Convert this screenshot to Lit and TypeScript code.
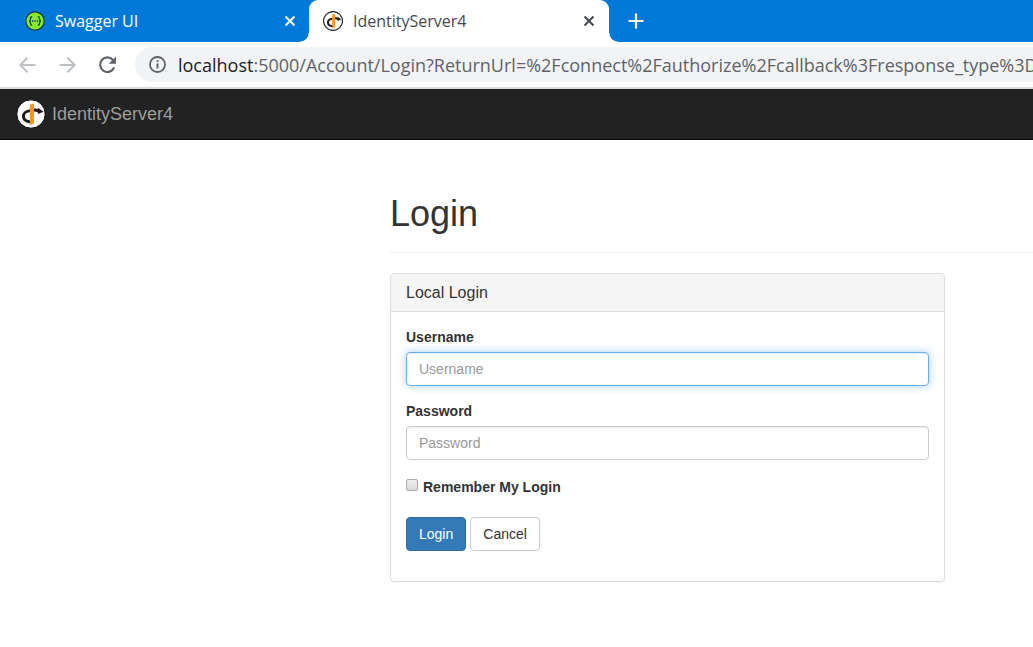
import { LitElement, html, css, svg } from "lit";
import { customElement, property } from "lit/decorators.js";

const mark = svg`
  <path d="M14.500 11.600C9.800 12 7.400 14.600 7.400 17.300c0 3 2.800 5.300 7.600 5.700" fill="none" stroke="#1b1b1b" stroke-width="2.900"/>
  <path d="M17.500 9.700c1.600-.3 3-.1 4.200.4l.2-1.300 5.600 3.900-5.600 2.300-.1-1.700c-1.300-.7-2.700-.9-4.300-.7z" fill="#1b1b1b"/>
  <path d="M13.800 5.700l4.200-1.400v20.400l-4.200 1.300z" fill="#ff9412"/>`;

@customElement("identity-logo")
export class IdentityLogo extends LitElement {
  @property({ type: Number }) size = 30;

  static styles = css`
    :host { display: block; flex: none; }
    svg { display: block; }
  `;

  render() {
    return html`<svg width=${this.size} height=${this.size} viewBox="0 0 30 30" aria-hidden="true">
      <circle cx="15" cy="15" r="14.200" fill="#fff" stroke=${this.size < 25 ? "#2b2b2b" : "#0c0c0c"} stroke-width=${this.size < 25 ? 1.8 : 1} />
      ${mark}
    </svg>`;
  }
}

@customElement("browser-chrome")
export class BrowserChrome extends LitElement {
  static styles = css`
    :host { display: block; font-family: "Open Sans", "Noto Sans", sans-serif; }
    button { border: 0; padding: 0; background: none; color: inherit; display: block; flex: none; }
    svg { display: block; flex: none; }
    .tabs { display: flex; height: 42px; background: #0078d7; color: #fff; font-size: 16px; line-height: 22px; }
    .tab { box-sizing: border-box; display: flex; align-items: center; gap: 10px; padding: 0 12px 0 25px; width: 309px; }
    .tab.active { position: relative; width: 300px; padding: 0 13px 0 14px; background: #fff; color: #45494d; border-radius: 9px 9px 0 0; }
    .tab.active::before, .tab.active::after { content: ""; position: absolute; bottom: 0; width: 9px; height: 9px; }
    .tab.active::before { right: 100%; background: radial-gradient(circle at 0 0, #0078d7 8px, #fff 9px); }
    .tab.active::after { left: 100%; background: radial-gradient(circle at 100% 0, #0078d7 8px, #fff 9px); }
    .title { flex: 1; white-space: nowrap; }
    .add { padding-left: 19px; }
    .toolbar { display: flex; align-items: center; height: 45px; padding-left: 18px; background: #fff; border-bottom: 2px solid #dadce0; color: #5f6368; }
    .nav { display: flex; gap: 20px; }
    .nav button:disabled { color: #bdc1c6; }
    .address { display: flex; flex: 1; min-width: 0; align-items: center; gap: 12px; height: 35px; margin-left: 16px; padding-left: 14px; overflow: hidden; background: #f1f3f4; border-radius: 18px 0 0 18px; }
    .url { white-space: nowrap; font-size: 18px; line-height: 26px; }
    .host { color: #202124; }
  `;

  private cross = html`<svg width="14" height="14" viewBox="0 0 14 14"><path d="M2.500 2.500l9 9M11.500 2.500l-9 9" stroke="currentColor" stroke-width="2" fill="none"/></svg>`;

  render() {
    return html`
      <div class="tabs">
        <div class="tab">
          <svg width="20" height="20" viewBox="0 0 20 20" aria-hidden="true">
            <circle cx="10" cy="10" r="9.200" fill="#85ea2d" stroke="#173647" stroke-width="1.200"/>
            <path d="M7.200 5.700c-1.400 0-1.700.5-1.700 1.700 0 1.500-.1 2.300-1.300 2.600 1.200.3 1.300 1.100 1.300 2.600 0 1.200.3 1.700 1.700 1.700M12.800 5.700c1.400 0 1.700.5 1.700 1.700 0 1.500.1 2.300 1.300 2.600-1.200.3-1.300 1.100-1.300 2.600 0 1.200-.3 1.700-1.700 1.700" fill="none" stroke="#173647" stroke-width="1.300"/>
            <path d="M7 10h1.300M9.400 10h1.300M11.800 10h1.300" stroke="#173647" stroke-width="1.300"/>
          </svg>
          <span class="title">Swagger UI</span>
          <button aria-label="Close Swagger UI">${this.cross}</button>
        </div>
        <div class="tab active">
          <identity-logo .size=${20}></identity-logo>
          <span class="title">IdentityServer4</span>
          <button aria-label="Close IdentityServer4">${this.cross}</button>
        </div>
        <button class="add" aria-label="New tab">
          <svg width="16" height="16" viewBox="0 0 16 16"><path d="M8 .5v15M.5 8h15" stroke="currentColor" stroke-width="2.200"/></svg>
        </button>
      </div>
      <div class="toolbar">
        <div class="nav">
          <button aria-label="Back" disabled>
            <svg width="20" height="20" viewBox="0 0 20 20"><path d="M17.500 10H3M9.500 2.800L2.300 10l7.200 7.200" fill="none" stroke="currentColor" stroke-width="2"/></svg>
          </button>
          <button aria-label="Forward" disabled>
            <svg width="20" height="20" viewBox="0 0 20 20"><path d="M1.500 10H16M9.500 2.800l7.200 7.200-7.200 7.200" fill="none" stroke="currentColor" stroke-width="2"/></svg>
          </button>
          <button aria-label="Reload">
            <svg width="21" height="20" viewBox="0 0 21 20"><path d="M15.200 5.200A7.300 7.300 0 1 0 16.200 12.400" fill="none" stroke="currentColor" stroke-width="2.200"/><path d="M18 1.500v7.300h-7.300z" fill="currentColor"/></svg>
          </button>
        </div>
        <div class="address">
          <svg width="17" height="17" viewBox="0 0 17 17" aria-hidden="true"><circle cx="8.500" cy="8.500" r="7.500" fill="none" stroke="currentColor" stroke-width="1.800"/><path d="M8.500 4.200v1.900M8.500 7.500v5" stroke="currentColor" stroke-width="1.900"/></svg>
          <span class="url"><span class="host">localhost</span>:5000/Account/Login?ReturnUrl=%2Fconnect%2Fauthorize%2Fcallback%3Fresponse_type%3D</span>
        </div>
      </div>`;
  }
}

@customElement("app-root")
export class AppRoot extends LitElement {
  static styles = css`
    :host { display: block; overflow: hidden; background: #fff; color: #333; font: 14px/20px "Liberation Sans", Arial, sans-serif; }
    .navbar { display: flex; height: 50px; background: #222; border-bottom: 1px solid #080808; }
    .brand { display: flex; align-items: center; gap: 6px; padding-left: 16px; color: #9d9d9d; font-size: 18px; text-decoration: none; }
    .page { padding: 54px 0 64px 390px; }
    h1, h2 { margin: 0; font-weight: 400; }
    h1 { padding-bottom: 18px; border-bottom: 1px solid #eee; font-size: 36px; line-height: 40px; }
    .panel { box-sizing: border-box; max-width: 555px; margin-top: 20px; border: 1px solid #ddd; border-radius: 4px; box-shadow: 0 1px 1px rgba(0, 0, 0, 0.05); }
    h2 { padding: 10px 15px; background: #f5f5f5; border-bottom: 1px solid #ddd; border-radius: 3px 3px 0 0; font-size: 16px; line-height: 17px; }
    form { padding: 15px 15px 30px; }
    .group { margin-bottom: 15px; }
    label { font-weight: 700; }
    .group label { display: block; margin-bottom: 5px; }
    .control { box-sizing: border-box; display: block; width: 100%; height: 34px; padding: 6px 12px; border: 1px solid #ccc; border-radius: 4px; outline: 0; background: #fff; font: inherit; color: #555; box-shadow: inset 0 1px 1px rgba(0, 0, 0, 0.075); }
    .control::placeholder { color: #999; opacity: 1; }
    .control.current { border-color: #66afe9; box-shadow: inset 0 1px 1px rgba(0, 0, 0, 0.075), 0 0 8px rgba(102, 175, 233, 0.6); }
    .remember { display: flex; align-items: flex-start; gap: 5px; padding-top: 2px; }
    .check { appearance: none; box-sizing: border-box; width: 12px; height: 12px; margin: 2px 0 0; border: 1px solid #a9a9a9; border-radius: 2px; background: linear-gradient(#eee, #dadada); }
    .actions { display: flex; gap: 4px; }
    .btn { height: 34px; padding: 0 12px; border: 1px solid #ccc; border-radius: 4px; background: #fff; color: #333; font: inherit; }
    .btn.primary { background: #337ab7; border-color: #2e6da4; color: #fff; }
  `;

  render() {
    return html`
      <browser-chrome></browser-chrome>
      <nav class="navbar">
        <a class="brand" href="#"><identity-logo></identity-logo><span>IdentityServer4</span></a>
      </nav>
      <main class="page">
        <h1>Login</h1>
        <section class="panel">
          <h2>Local Login</h2>
          <form @submit=${(e: Event) => e.preventDefault()}>
            <div class="group">
              <label for="username">Username</label>
              <input class="control current" id="username" type="text" placeholder="Username" />
            </div>
            <div class="group">
              <label for="password">Password</label>
              <input class="control" id="password" type="password" placeholder="Password" />
            </div>
            <div class="group remember">
              <input class="check" id="remember" type="checkbox" />
              <label for="remember">Remember My Login</label>
            </div>
            <div class="actions">
              <button class="btn primary" type="submit">Login</button>
              <button class="btn" type="button">Cancel</button>
            </div>
          </form>
        </section>
      </main>`;
  }
}
